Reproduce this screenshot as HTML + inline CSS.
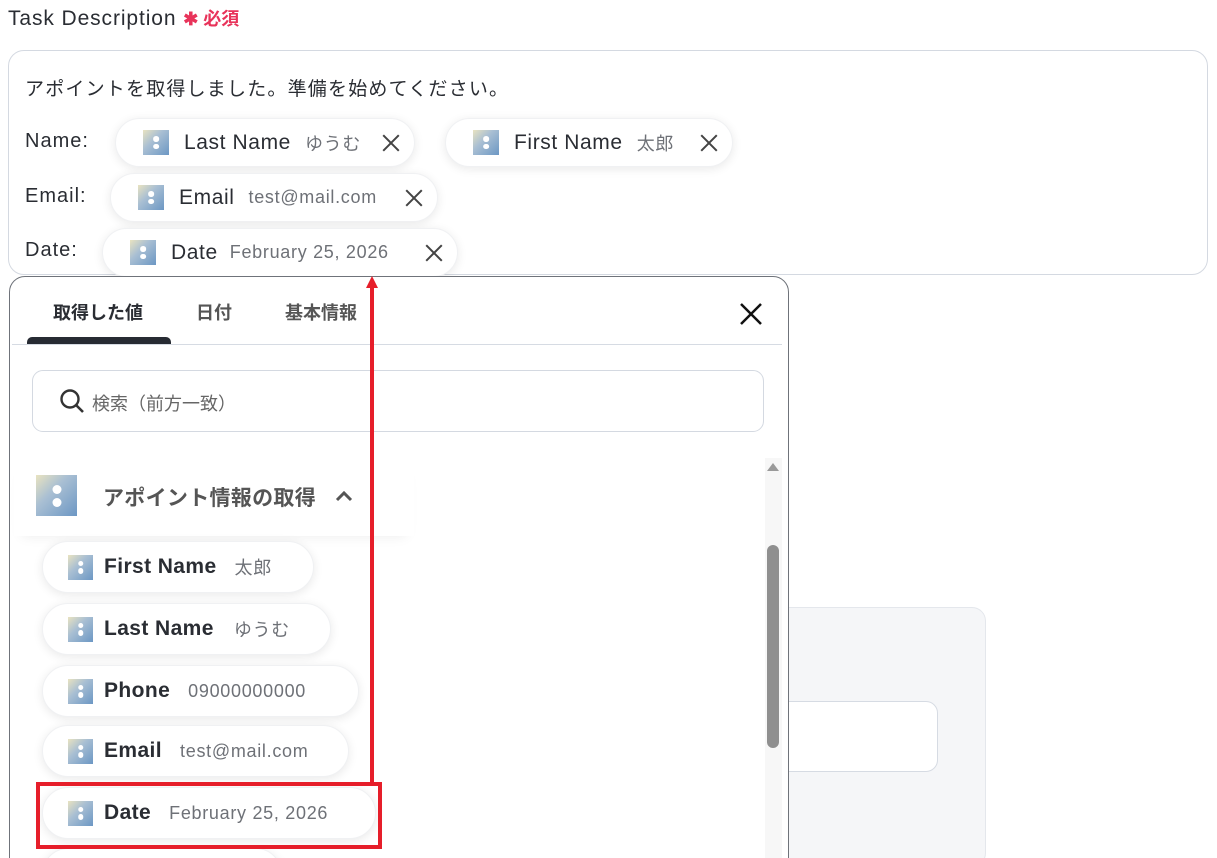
<!DOCTYPE html>
<html><head><meta charset="utf-8"><style>
*{box-sizing:border-box;margin:0;padding:0}
html,body{width:1217px;height:858px;overflow:hidden}
body{background:#fff;position:relative;font-family:"Liberation Sans","Noto Sans CJK JP",sans-serif;color:#2a2d33}
.abs{position:absolute}
.ic{position:relative;flex:none;background:linear-gradient(135deg,#e9e3c0 0%,#a9bfd3 40%,#6c97c4 100%)}
.ic.a{position:absolute}
.ic::before,.ic::after{content:"";position:absolute;left:50%;width:22%;height:22%;border-radius:50%;background:#fff;transform:translateX(-50%)}
.ic::before{top:25%}.ic::after{top:55%}
.pill{position:absolute;background:#fff;border-radius:26px;box-shadow:0 2px 10px rgba(0,0,0,.09);border:1px solid #f0f1f3;display:flex;align-items:center;white-space:nowrap}
.lbl{font-size:21px;letter-spacing:.6px}
.val{font-size:18px;color:#6e7177;letter-spacing:.7px}
.x{position:absolute;width:18px;height:18px;top:50%;margin-top:-9px}
.x::before,.x::after{content:"";position:absolute;left:8px;top:-2px;width:2px;height:22px;background:#444;transform:rotate(45deg)}
.x::after{transform:rotate(-45deg)}
.row{position:absolute;font-size:20px;letter-spacing:1px}
.it .lbl{font-weight:bold;font-size:21px;letter-spacing:.4px}
</style></head><body>
<div class="abs" style="left:8px;top:5px;font-size:21px;letter-spacing:.9px">Task Description <span style="color:#e8335a;font-size:18px;font-weight:bold;letter-spacing:0">✱ 必須</span></div>
<div class="abs" style="left:8px;top:50px;width:1200px;height:225px;border:1px solid #d4d9e1;border-radius:16px"></div>
<div class="row" style="left:25px;top:74px;font-size:19px;letter-spacing:1.2px">アポイントを取得しました。準備を始めてください。</div>
<div class="row" style="left:25px;top:130px">Name:</div>
<div class="row" style="left:25px;top:185px">Email:</div>
<div class="row" style="left:25px;top:239px">Date:</div>

<div class="pill" style="left:115px;top:118px;width:300px;height:49px;padding-left:27px"><div class="ic" style="width:26px;height:25px;margin-right:15px"></div><div class="lbl" style="margin-right:14px">Last Name</div><div class="val">ゆうむ</div><div class="x" style="left:266px"></div></div>
<div class="pill" style="left:445px;top:118px;width:288px;height:49px;padding-left:27px"><div class="ic" style="width:26px;height:25px;margin-right:15px"></div><div class="lbl" style="margin-right:14px">First Name</div><div class="val">太郎</div><div class="x" style="left:254px"></div></div>
<div class="pill" style="left:110px;top:173px;width:328px;height:49px;padding-left:27px"><div class="ic" style="width:26px;height:25px;margin-right:15px"></div><div class="lbl" style="margin-right:14px">Email</div><div class="val">test@mail.com</div><div class="x" style="left:294px"></div></div>
<div class="pill" style="left:102px;top:228px;width:356px;height:49px;padding-left:27px"><div class="ic" style="width:26px;height:25px;margin-right:15px"></div><div class="lbl" style="margin-right:12px">Date</div><div class="val">February 25, 2026</div><div class="x" style="left:322px"></div></div>

<div class="abs" style="left:760px;top:607px;width:226px;height:260px;background:#f5f6f8;border:1px solid #e4e7ec;border-radius:14px"></div>
<div class="abs" style="left:760px;top:701px;width:178px;height:71px;background:#fff;border:1px solid #d6dbe3;border-radius:12px"></div>

<div class="abs" style="left:9px;top:276px;width:780px;height:600px;background:#fff;border:1px solid #6f737a;border-radius:16px"></div>
<div class="abs" style="left:53px;top:299px;font-size:18px;font-weight:bold">取得した値</div>
<div class="abs" style="left:196px;top:299px;font-size:18px;color:#555;font-weight:bold">日付</div>
<div class="abs" style="left:285px;top:299px;font-size:18px;color:#555;font-weight:bold">基本情報</div>
<div class="abs" style="left:12px;top:344px;width:770px;height:1px;background:#d6dbe3"></div>
<div class="abs" style="left:27px;top:337px;width:144px;height:7px;background:#272b33;border-radius:5px 5px 0 0"></div>
<svg class="abs" style="left:739px;top:302px" width="24" height="24"><path d="M2 2L22 22M22 2L2 22" stroke="#111" stroke-width="2.5"/></svg>
<div class="abs" style="left:32px;top:370px;width:732px;height:62px;border:1px solid #d4d9e1;border-radius:11px"></div>
<svg class="abs" style="left:59px;top:388px" width="26" height="26"><circle cx="11" cy="11" r="8.5" fill="none" stroke="#333" stroke-width="2.4"/><path d="M17 17L24 24" stroke="#333" stroke-width="2.6"/></svg>
<div class="abs" style="left:92px;top:390px;font-size:18px;color:#666">検索（前方一致）</div>

<div class="abs" style="left:765px;top:458px;width:17px;height:400px;background:#f7f7f7"></div>
<svg class="abs" style="left:766px;top:462px" width="14" height="10"><path d="M7 1L13 9H1Z" fill="#9a9a9a"/></svg>
<div class="abs" style="left:767px;top:545px;width:12px;height:203px;background:#8f8f8f;border-radius:6px"></div>

<div class="abs" style="left:14px;top:460px;width:400px;height:76px;background:#fff;box-shadow:0 8px 12px -8px rgba(0,0,0,.08)"></div>
<div class="ic a" style="left:36px;top:475px;width:41px;height:41px"></div>
<div class="abs" style="left:103px;top:482px;font-size:21px;font-weight:bold;color:#555;letter-spacing:.3px">アポイント情報の取得</div>
<svg class="abs" style="left:334px;top:489px" width="20" height="14"><path d="M3 11L10 4L17 11" fill="none" stroke="#555" stroke-width="3"/></svg>

<div class="pill it" style="left:42px;top:541px;width:272px;height:52px;padding-left:25px"><div class="ic" style="width:25px;height:25px;margin-right:11px"></div><div class="lbl" style="margin-right:18px">First Name</div><div class="val">太郎</div></div>
<div class="pill it" style="left:42px;top:603px;width:289px;height:52px;padding-left:25px"><div class="ic" style="width:25px;height:25px;margin-right:11px"></div><div class="lbl" style="margin-right:20px">Last Name</div><div class="val">ゆうむ</div></div>
<div class="pill it" style="left:42px;top:665px;width:317px;height:52px;padding-left:25px"><div class="ic" style="width:25px;height:25px;margin-right:11px"></div><div class="lbl" style="margin-right:18px">Phone</div><div class="val">09000000000</div></div>
<div class="pill it" style="left:42px;top:725px;width:307px;height:52px;padding-left:25px"><div class="ic" style="width:25px;height:25px;margin-right:11px"></div><div class="lbl" style="margin-right:18px">Email</div><div class="val">test@mail.com</div></div>
<div class="pill it" style="left:42px;top:787px;width:334px;height:52px;padding-left:25px"><div class="ic" style="width:25px;height:25px;margin-right:11px"></div><div class="lbl" style="margin-right:18px">Date</div><div class="val">February 25, 2026</div></div>
<div class="pill" style="left:42px;top:848px;width:240px;height:52px"></div>

<div class="abs" style="left:36px;top:782px;width:346px;height:67px;border:4px solid #e61e2a"></div>
<div class="abs" style="left:370px;top:286px;width:4px;height:498px;background:#e61e2a"></div>
<svg class="abs" style="left:365px;top:276px" width="14" height="12"><path d="M7 0L13 12H1Z" fill="#e61e2a"/></svg>
</body></html>
